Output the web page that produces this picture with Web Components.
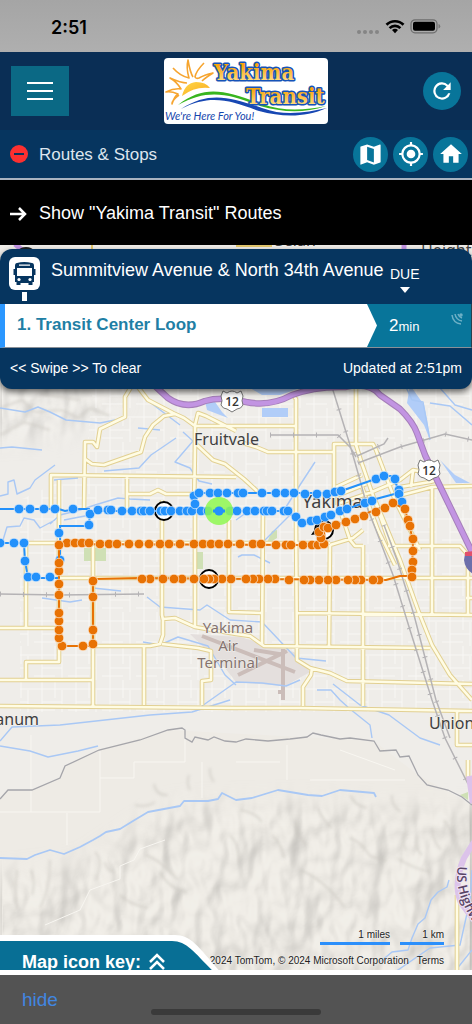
<!DOCTYPE html>
<html lang="en">
<head>
<meta charset="utf-8">
<meta name="viewport" content="width=device-width, initial-scale=1">
<title>Yakima Transit</title>
<style>
  html { height: 100%; }
  body {
    margin: 0;
    min-height: 100%;
    display: flex;
    flex-direction: column;
    font-family: "Liberation Sans", Arial, sans-serif;
    color: white;
    --navy: #06355f;
    --teal: #08759a;
  }
  route-map { flex: 1; }
</style>
</head>
<body>
<status-bar></status-bar>
<app-header><transit-logo></transit-logo></app-header>
<section-bar>Routes &amp; Stops</section-bar>
<show-routes>Show "Yakima Transit" Routes</show-routes>
<route-map>
  <stop-card slot="card">
    <span slot="stop">Summitview Avenue &amp; North 34th Avenue</span>
    <span slot="route">1. Transit Center Loop</span>
    <span slot="updated">Updated at 2:51pm</span>
  </stop-card>
  <map-key slot="key">Map icon key:</map-key>
  <map-credits slot="credits"></map-credits>
</route-map>
<bottom-bar></bottom-bar>

<script>
class BaseElement extends HTMLElement {
  constructor() {
    super();
    this.root = this.attachShadow({ mode: 'open' });
    this.root.innerHTML = this.renderHTML();
  }
}

class StatusBar extends BaseElement {
  renderHTML() {
    return `
      <style>
        :host {
          display: flex;
          align-items: center;
          justify-content: space-between;
          box-sizing: border-box;
          height: 52px;
          padding: 2px 31px 0 51px;
          color: black;
          background: linear-gradient(#a5a5a5, #afafaf);
        }
        time { font: 600 18px Inter, sans-serif; }
        svg { display: block; }
      </style>
      <time>2:51</time>
      <svg width="84" height="18" viewBox="0 0 84 18" aria-label="Wi-Fi on, battery full">
        <g fill="#858585">
          <circle cx="2" cy="14" r="2"/><circle cx="8" cy="14" r="2"/>
          <circle cx="14" cy="14" r="2"/><circle cx="20" cy="14" r="2"/>
        </g>
        <g fill="none" stroke="#000" stroke-width="2.7">
          <path d="M29.5 6.8a12 12 0 0 1 17 0"/>
          <path d="M32.6 10.1a7.6 7.6 0 0 1 10.8 0"/>
        </g>
        <path d="M38 15.2l-3-3.1a4.3 4.3 0 0 1 6 0z"/>
        <rect x="54" y="1.8" width="26" height="13" rx="4" fill="none" stroke="#6d6d6d" stroke-width="1.2"/>
        <rect x="56" y="3.8" width="22" height="9" rx="2"/>
        <path d="M81.5 6v4.6q1.8-.6 1.8-2.3t-1.8-2.3" fill="#777"/>
      </svg>
    `;
  }
}

class TransitLogo extends BaseElement {
  renderHTML() {
    return `
      <style>
        :host { display: block; width: 164px; }
        svg { display: block; width: 100%; background: white; border-radius: 4px; }
        .name {
          font: bold 22px "DejaVu Serif Condensed", "DejaVu Serif", serif;
          fill: url(#gold);
          stroke: #1553b8;
          stroke-width: 3;
          stroke-linejoin: round;
          paint-order: stroke;
        }
        .motto { font: italic 11px Lato, sans-serif; fill: #1546ad; }
      </style>
      <svg viewBox="0 0 164 66" role="img" aria-label="Yakima Transit">
        <defs>
          <linearGradient id="gold" x1="0" y1="0" x2="0" y2="1">
            <stop offset=".25" stop-color="#f9a50e"/>
            <stop offset=".9" stop-color="#ffe28a"/>
          </linearGradient>
          <linearGradient id="sun" x1="0" y1="0" x2="1" y2="1">
            <stop offset="0" stop-color="#ffd84a"/>
            <stop offset="1" stop-color="#f9a81c"/>
          </linearGradient>
        </defs>
        <path d="M18 38Q21 25 32 24Q42 24 46 30Q31 28 18 38z" fill="url(#sun)"/>
        <g fill="none" stroke="#f6a530" stroke-width="1.6" stroke-linejoin="round">
          <path d="M15 37Q8 42 8 46Q10 39 14 36Q7 33 2 34Q10 30 17 31Q13 24 6 20Q17 25 23 25"/>
          <path d="M9 10Q16 18 25 20Q22 10 24 2Q26 14 29 19"/>
          <path d="M40 5Q32 13 31 19Q32 21 35 20Q40 17 49 15Q41 20 38 23"/>
        </g>
        <path d="M14 47C42 25 64 34 98 46C120 54 142 52 162 48C138 56 118 54 96 48C65 36 44 30 14 47z" fill="#38b51f"/>
        <path d="M17 51C46 32 68 40 98 50C122 59 143 54 163 50C140 60 118 59 95 53C65 42 46 36 17 51z" fill="#1747b3"/>
        <text class="name" x="50" y="22">Yakima</text>
        <text class="name" x="82" y="46">Transit</text>
        <text class="motto" x="1" y="62">We're Here For You!</text>
      </svg>
    `;
  }
}

class AppHeader extends BaseElement {
  renderHTML() {
    return `
      <style>
        :host {
          display: flex;
          align-items: center;
          justify-content: space-between;
          padding: 6px 11px;
          background: #0a2e55;
        }
        button { border: 0; padding: 0; display: grid; place-items: center; }
        .menu { width: 58px; height: 50px; background: #0b6985; }
        .refresh { width: 38px; height: 38px; border-radius: 50%; background: var(--teal); }
      </style>
      <button class="menu" aria-label="Menu">
        <svg width="28" height="20" stroke="#fff" stroke-width="2">
          <path d="M1 2h26M1 10h26M1 18h26"/>
        </svg>
      </button>
      <slot></slot>
      <button class="refresh" aria-label="Refresh">
        <svg width="26" height="26" viewBox="0 0 24 24" fill="#fff">
          <path d="M17.65 6.35A8 8 0 1 0 19.73 14h-2.08A6 6 0 1 1 12 6c1.66 0 3.14.69 4.22 1.78L13 11h7V4z"/>
        </svg>
      </button>
    `;
  }
}

class SectionBar extends BaseElement {
  renderHTML() {
    return `
      <style>
        :host {
          display: flex;
          align-items: center;
          height: 48px;
          padding: 0 4px 0 10px;
          border-bottom: 2px solid #a9b3c0;
          background: var(--navy);
        }
        h1 { flex: 1; margin: 2px 0 0 11px; font-size: 17px; font-weight: normal; color: #dde5ee; }
        nav { display: flex; gap: 5px; }
        button { border: 0; padding: 0; display: grid; place-items: center; background: none; }
        nav button { width: 35px; height: 35px; border-radius: 50%; background: var(--teal); }
      </style>
      <button aria-label="Collapse">
        <svg width="18" height="18"><circle cx="9" cy="9" r="9" fill="#fc3030"/><path d="M4 9h10" stroke="#06355f" stroke-width="2"/></svg>
      </button>
      <h1><slot></slot></h1>
      <nav>
        <button aria-label="Map">
          <svg width="27" height="27" viewBox="0 0 24 24" fill="#fff">
            <path d="M20.5 3l-.16.03L15 5.1 9 3 3.36 4.9A.5.5 0 0 0 3 5.38V20.5a.5.5 0 0 0 .66.47L9 18.9l6 2.1 5.64-1.9A.5.5 0 0 0 21 18.62V3.5a.5.5 0 0 0-.5-.5zM15 19l-6-2.11V5l6 2.11z"/>
          </svg>
        </button>
        <button aria-label="My location">
          <svg width="26" height="26" viewBox="0 0 24 24" fill="#fff">
            <path d="M12 8a4 4 0 1 0 0 8 4 4 0 0 0 0-8zm8.94 3A9 9 0 0 0 13 3.06V1h-2v2.06A9 9 0 0 0 3.06 11H1v2h2.06A9 9 0 0 0 11 20.94V23h2v-2.06A9 9 0 0 0 20.94 13H23v-2zM12 19a7 7 0 1 1 0-14 7 7 0 0 1 0 14z"/>
          </svg>
        </button>
        <button aria-label="Home">
          <svg width="26" height="26" viewBox="0 0 24 24" fill="#fff"><path d="M10 20v-6h4v6h5v-8h3L12 3 2 12h3v8z"/></svg>
        </button>
      </nav>
    `;
  }
}

class ShowRoutes extends BaseElement {
  renderHTML() {
    return `
      <style>
        :host { display: block; background: black; }
        button {
          display: flex;
          align-items: center;
          gap: 12px;
          width: 100%;
          height: 65px;
          padding: 2px 10px 0;
          border: 0;
          background: none;
          color: white;
          font: 18px "Liberation Sans", Arial, sans-serif;
        }
      </style>
      <button>
        <svg width="17" height="16" fill="none" stroke="#fff" stroke-width="2.5"><path d="M0 8h15M9 2l6 6-6 6"/></svg>
        <span><slot></slot></span>
      </button>
    `;
  }
}

class StopCard extends BaseElement {
  renderHTML() {
    return `
      <style>
        :host {
          display: block;
          overflow: hidden;
          border-radius: 12px;
          background: var(--navy);
          box-shadow: 0 3px 6px rgba(0, 0, 0, 0.6);
        }
        header, .arrival, footer { display: flex; }
        header { height: 55px; }
        .sign { margin: 8px 11px 0 9px; flex: none; }
        h2 { flex: 1; margin: 11px 0 0; font-size: 18px; line-height: 20px; font-weight: normal; white-space: nowrap; }
        .due {
          flex: none;
          width: 82px;
          padding-top: 17px;
          font-size: 14px;
          line-height: 16px;
        }
        .due svg { display: block; margin: 5px 0 0 10px; }
        .arrival {
          height: 44px;
          box-sizing: border-box;
          border-left: 5px solid #2b97ff;
          border-right: 1px solid #24414f;
          background: var(--teal);
          border-bottom: 1px solid #8a9097;
        }
        .arrival a {
          flex: 1;
          padding-left: 12px;
          background: white;
          color: #1f7fa5;
          font-size: 17px;
          line-height: 42px;
          font-weight: bold;
          text-decoration: none;
          clip-path: polygon(0 0, calc(100% - 10px) 0, 100% 50%, calc(100% - 10px) 100%, 0 100%);
        }
        .time { width: 82px; padding-left: 12px; display: flex; justify-content: space-between; font-size: 17px; line-height: 44px; }
        .time small { font-size: 13px; }
        .time svg { margin: 9px 8px 0 0; }
        footer { justify-content: space-between; padding: 0 10px; font-size: 14px; line-height: 41px; }
      </style>
      <header>
        <svg class="sign" width="31" height="44" viewBox="0 0 31 44" role="img" aria-label="Bus stop">
          <rect width="31" height="33" rx="6" fill="#fff"/>
          <rect x="13" y="35" width="5" height="9" fill="#fff"/>
          <path fill="#06355f" d="M8 6Q15 4 23 6Q25 6 25 9V12h1.5v6H25v7h-1.5v3h-4v-2h-8v2h-4v-3H6v-7H4.5v-6H6V9Q6 6 8 6z"/>
          <path fill="#fff" d="M10 7.5h11v1.3H10zM8 11h15v8H8z"/>
          <circle cx="10" cy="22.5" r="1.6" fill="#fff"/><circle cx="21" cy="22.5" r="1.6" fill="#fff"/>
        </svg>
        <h2><slot name="stop"></slot></h2>
        <div class="due">DUE
          <svg width="10" height="6" fill="#fff"><path d="M0 0h10L5 6z"/></svg>
        </div>
      </header>
      <div class="arrival">
        <a href="#route-1"><slot name="route"></slot></a>
        <div class="time">
          <span>2<small>min</small></span>
          <svg width="12" height="12" fill="none" stroke="#6db0c6" stroke-width="1.5">
            <path d="M1 2Q2 10 10 11M4 1Q5 7 11 8M7 1Q8 4 11 5"/><circle cx="10" cy="2" r="1"/>
          </svg>
        </div>
      </div>
      <footer>
        <span>&lt;&lt; Swipe &gt;&gt; To clear</span>
        <slot name="updated"></slot>
      </footer>
    `;
  }
}

// main roads, drawn as a tan casing with a pale centre
const ROADS = `
  M131 387L125 397V417L100 429L97 447L93 442H85L84 509
  M85 459L92 464L104 465L141 452L145 437L153 425L164 416L175 414
  M138 387L148 400L173 413L184 418L195 426V445L194 512
  M195 425L198 413L206 416L236 431M195 426H296M197 445L213 460L225 464L244 479L257 491
  M51 509V475L236 477M127 477V512M128 494H150L158 490L166 494H193
  M243 443L256 447L268 452H333M291 393L296 399V520L297 660L310 668L330 673L347 681L472 684
  M356 389V445L361 461M334 505V444H373L376 450
  M336 487L362 475M336 496L366 484M340 503L372 492L400 480L413 470L430 473M413 471L411 487M400 487L430 482L438 480
  M402 495L425 489L432 487L472 486M432 488V615
  M361 461L392 550M376 450L395 500L420 550M362 487L378 530L395 565M340 510L350 540L355 546H363M330 545L353 538L363 530
  M26 543V628M26 543H330M59 578H472M0 628H59M59 480V662H26V680M0 680H93M93 545V706
  M0 706L236 708H300L472 711M93 646H150L160 644L163 635V620L162 615V500M162 644L198 648L211 651V680L202 681V705
  M144 646V705M163 619L175 618L195 627L236 634L250 636L264 646L430 648M195 510V626M229 520V612L262 613M263 512L262 645
  M297 613L472 615M330 545L329 646M363 545V706M312 668L311 675L303 687V706
  M375 500L400 560L418 610L432 645L450 675L472 700M388 546H460L468 555V615M466 598H472
  M457 712V745H472M457 895V972M468 760V780`;

const RIVERS = `
  M0 408L25 412L38 407L50 412L66 420L100 423L115 420M0 448L12 447L42 450
  M0 496L8 494L8 482L14 480L17 494L30 488L35 480L55 465M54 480L78 478M104 471L139 468L151 455L176 438
  M183 432L193 441L175 462L190 468L199 481L212 484M138 428L160 430
  M50 524L60 515L80 510L95 505L118 498L130 499L150 500
  M3 540L7 527L20 526L24 518L34 520L40 528L55 520M64 520L90 515
  M42 598L70 602L82 600M93 588L121 591M147 597L160 607L200 610L207 605L230 620L262 622L296 658L326 661
  M143 642L160 645L178 637L208 646L225 675L236 685M202 706L236 682L262 683L286 686L300 680
  M0 741L12 727L60 725L150 715L192 712L230 700M317 690L331 690L340 700L350 709L370 725L372 738M333 684L360 705L389 715L420 738L440 745
  M238 557L242 555H254L270 563M262 543L275 530L290 515M286 507L300 485L315 462
  M147 400L180 425M405 385L412 400L423 402L430 440M440 388L455 405L472 410M430 403L450 406L472 425
  M236 520L250 510L275 512M0 746L30 751L48 757L78 751L98 746M395 972L430 948L460 945L470 900L472 870
  M456 970L472 950M380 962L392 952L408 950L412 938L418 924L425 918L431 900L438 892L447 887L449 880`;

const RIDGE_STREAM = 'M0 858L27 859L35 855L50 850L64 854L80 847L93 840L100 836L106 832L120 829L133 821L148 812L180 806L184 801L208 801L218 799L222 793L236 800L252 798L278 790L308 795L322 796L340 790L374 793L376 797';
const BOUNDARY = 'M0 799L8 790H32L60 778L65 766L99 750L140 740L168 730L182 728L185 730V738L192 742L195 737L208 740L214 737L225 741L236 742L246 739L268 741L290 739L307 737L313 733L321 735L340 739L350 738L374 741L380 751L396 750L400 757L409 756L418 775L427 785L448 790L462 797L472 805';
const HIGHWAY = 'M154 385L168 398Q185 410 205 401Q222 396 246 402Q270 407 292 395Q315 386 345 387Q370 382 380 395L400 409Q413 422 417 433L425 455L438 482L472 552';
const RAILS = 'M332 387L350 445L360 480L368 510L376 530L393 575L410 630L432 700L445 738L468 784M384 525L397 560L414 615L436 700L450 738M270 435H338L350 447L356 457M357 456L384 444L388 438M358 463L400 447L445 434L472 440M0 594L60 595L144 594';

const BLUE_LINES = 'M0 509H59L65 511L75 509H90M59 578H28L25 561L24 543H0M60 560V526H89L90 511H219M219 511H288Q298 523 305 524L347 509L372 500L402 492M194 511V496L199 493H335L341 491L384 476H391L399 489L402 502';
const ORANGE_LINES = 'M324 530L325 543L303 545L59 544V640L62 646H93V579L140 578L386 580L400 576H412L413 540L405 509L393 503L324 530';

const BLUE_STOPS = [
  [0, 543], [14, 543], [24, 543], [25, 561], [28, 577], [36, 577], [50, 577], [59, 533], [60, 560], [89, 525],
  [19, 509], [30, 509], [44, 509], [55, 509], [73, 509], [90, 514], [98, 510], [108, 510], [111, 510], [122, 511],
  [132, 511], [141, 511], [144, 511], [150, 511], [161, 511], [165, 511], [171, 511], [180, 511], [187, 511], [192, 511],
  [201, 511], [208, 511], [219, 511], [230, 511], [237, 511], [247, 511], [255, 511], [264, 511], [267, 511], [272, 511],
  [284, 511], [288, 511], [296, 517], [302, 523], [311, 521], [317, 520], [325, 517], [331, 515], [340, 511], [347, 509],
  [365, 503], [372, 501], [194, 496], [195, 504], [199, 493], [210, 493], [218, 493], [227, 493], [238, 493], [243, 493],
  [262, 493], [276, 493], [285, 493], [294, 493], [305, 494], [317, 494], [327, 494], [335, 492], [341, 491], [376, 479],
  [384, 476], [395, 479], [399, 490], [399, 494], [402, 502]
];

const ORANGE_STOPS = [
  [67, 543], [75, 543], [82, 543], [89, 543], [100, 544], [109, 544], [117, 544], [129, 544], [139, 544], [149, 544],
  [160, 544], [169, 544], [180, 544], [194, 544], [203, 544], [211, 544], [219, 544], [228, 544], [240, 544], [253, 544],
  [261, 544], [276, 545], [286, 545], [291, 545], [303, 545], [312, 545], [318, 545], [324, 544], [321, 538], [319, 532],
  [324, 527], [328, 528], [336, 525], [346, 522], [355, 519], [364, 516], [376, 512], [385, 508], [393, 503], [405, 509],
  [408, 520], [410, 526], [413, 539], [413, 551], [413, 562], [412, 570], [412, 577], [379, 580], [373, 580], [361, 580],
  [355, 580], [348, 580], [336, 580], [328, 580], [319, 580], [310, 580], [304, 580], [289, 580], [275, 579], [268, 579],
  [259, 579], [253, 579], [246, 579], [231, 579], [222, 579], [214, 579], [209, 579], [204, 579], [194, 579], [182, 579],
  [174, 579], [163, 579], [150, 579], [142, 579], [93, 581], [93, 597], [93, 630], [93, 644], [83, 646], [62, 646],
  [59, 638], [59, 630], [59, 621], [59, 613], [59, 595], [59, 584], [59, 571], [59, 563], [59, 545]
];

const dots = stops => stops.map(([x, y]) => `<circle cx="${x}" cy="${y}" r="4.8"/>`).join('');

class RouteMap extends BaseElement {
  renderHTML() {
    return `
      <style>
        :host {
          position: relative;
          display: flex;
          flex-direction: column;
          justify-content: space-between;
          min-height: 600px;
          padding-top: 4px;
          box-sizing: border-box;
          overflow: hidden;
          background: #efede9;
          border-bottom: 5px solid white;
        }
        .map { position: absolute; inset: 0; width: 100%; height: 100%; }
        .card, .bottom { position: relative; }
        .bottom { display: flex; justify-content: space-between; align-items: flex-end; margin-bottom: -5px; }
        .place { font: 16px "Noto Sans", "Open Sans", sans-serif; fill: #404040; stroke: #f3f1ed; stroke-width: 1; paint-order: stroke; }
        .big { font-size: 18px; }
        .airport { font-size: 15px; fill: #84736f; text-anchor: middle; }
        .shield { font: 600 12px "Open Sans", sans-serif; text-anchor: middle; fill: #333; }
        .highway { font: 600 13px "Open Sans", sans-serif; fill: #594566; stroke: #efe3f4; stroke-width: 2; paint-order: stroke; }
      </style>
      <svg class="map" viewBox="0 245 472 725" preserveAspectRatio="xMidYMin slice" role="img" aria-label="Route map of Yakima">
        <defs>
          <pattern id="streets" width="34" height="34" patternUnits="userSpaceOnUse">
            <path d="M8 0V34M21 0V18M28 10V34M0 9H34M8 22H28M0 30H21" fill="none" stroke="#fbfaf8" stroke-width="1"/>
          </pattern>
          <filter id="soft" x="-10%" y="-10%" width="120%" height="120%"><feGaussianBlur stdDeviation="12"/></filter>
          <filter id="blur"><feGaussianBlur stdDeviation="1.8"/></filter>
          <filter id="relief" x="0" y="0" width="100%" height="100%" color-interpolation-filters="sRGB">
            <feTurbulence type="fractalNoise" baseFrequency="0.03 0.018" numOctaves="3" seed="12"/>
            <feColorMatrix values="0 0 0 0 0  0 0 0 0 0  0 0 0 0 0  1 0 0 0 0"/>
            <feGaussianBlur stdDeviation="1.2"/>
            <feDiffuseLighting surfaceScale="14" diffuseConstant="1.1" lighting-color="#edeae3"><feDistantLight azimuth="225" elevation="64"/></feDiffuseLighting>
          </filter>
          <mask id="hills">
            <g filter="url(#soft)" fill="#fff">
              <path d="M-40 880L80 866L170 806L300 802L400 808L490 806V1010H-40z"/>
              <path d="M-30 370H118V410L60 435L-30 440z"/>
            </g>
          </mask>
          <path id="us97" d="M458 866Q453 893 475 925L490 940"/>
          <path id="sign" d="M-9-10L-5-8Q0-12 5-8L9-10L11-5Q9 0 11 4Q9 8 5 8L0 11L-5 8Q-9 8-11 4Q-9 0-11-5z"/>
        </defs>

        <path d="M0 800L8 790H32L60 778L65 766L99 750L168 730L374 741L418 775L472 805V975H0z" fill="#eeebe5"/>
        <rect y="245" width="472" height="730" fill="#fff" filter="url(#relief)" mask="url(#hills)" opacity=".2"/>
        <path d="M93 388H472V712H20V500L85 470z" fill="url(#streets)" opacity=".75"/>
        <g fill="none" stroke="#f8f6f1" stroke-width="1">
          <path d="M31 735V812M0 812H100V750M67 813V845M100 778H134V762H185V735M45 925L80 910L90 890L120 879V866L134 860L140 849L165 840M202 762V798M287 745V780M236 762H280M310 780H405M340 750L395 770"/>
        </g>
        <g fill="none" stroke="#c9c6bf" stroke-width="2" filter="url(#blur)" opacity=".6">
          <path d="M0 408L22 400L35 412L62 410L78 418L90 408L110 416M0 435L24 422L50 430M40 394L80 400"/>
          <path d="M154 784Q156 796 168 795M135 805Q146 808 155 802M189 775Q186 784 190 790M210 768Q209 776 214 782M17 870Q14 895 18 910M31 870Q36 880 32 895M50 860Q50 890 40 908M95 852Q104 860 96 880M105 862Q106 870 114 872M146 855Q160 860 178 880M120 895Q130 905 148 908M272 835Q282 845 284 858M295 820Q296 835 306 845M318 808Q322 820 332 828M350 795Q355 806 367 808M392 795Q391 806 401 812M349 838Q360 840 370 856L387 861M405 832Q401 842 406 850M417 835Q414 848 422 855M432 828Q433 842 441 850M444 820Q450 830 457 838M397 858Q412 868 430 872M160 872Q170 890 187 892M300 870Q325 880 345 908M240 810Q255 812 262 822M230 835Q240 845 238 862"/>
        </g>
        <g fill="#cfe0b5"><path d="M84 548H106V561H84zM197 552H203V569H197zM266 545L272 531L277 530V538zM460 795L468 792V800z"/></g>
        <g fill="#b1cdf8"><path d="M205 401L213 399L222 412L228 418L207 410zM262 408H288V417H262zM410 385L424 405L427 420L430 440L424 425L407 403zM440 460L455 475L470 483L456 483zM250 388H300L280 395H262z"/></g>
        <path d="M190 634L240 637L294 652L310 672L285 686L236 682L225 668z" fill="#e4dfdd"/>
        <g fill="none" stroke="#cbbdb9" stroke-width="4">
          <path d="M202 636L295 672M238 675L287 651M283 649V700M278 692H285M254 650L285 655"/>
        </g>

        <g fill="none" stroke="#a9c8f5" stroke-width="1.4" stroke-linejoin="round"><path d="${RIVERS}"/><path d="${RIDGE_STREAM}" stroke-width="1.8"/></g>
        <path d="${BOUNDARY}" fill="none" stroke="#a5a5aa" stroke-width="1.3"/>
        <path d="${ROADS}" fill="none" stroke="#e2d092" stroke-width="4.6" stroke-linejoin="round"/>
        <path d="${ROADS}" fill="none" stroke="#fffce4" stroke-width="2.6" stroke-linejoin="round"/>
        <path d="${RAILS}" fill="none" stroke="#b5b3b5" stroke-width="1.5"/>
        <path d="${RAILS}" fill="none" stroke="#b5b3b5" stroke-width="5" stroke-dasharray="1 22"/>
        <g fill="none" stroke-linejoin="round">
          <path d="${HIGHWAY}" stroke="#a67fba" stroke-width="6.5"/>
          <path d="${HIGHWAY}" stroke="#c294e2" stroke-width="4.5"/>
          <path d="M469 776L473 803M474 842L464 858Q453 884 461 903L474 920" stroke="#dcc3ea" stroke-width="6"/>
          <path d="M15 244L22 250M404 244V250" stroke="#c294e2" stroke-width="5"/>
          <path d="M92 244V250M236 246H272" stroke="#e2c66c" stroke-width="2"/>
        </g>
        <ellipse cx="26" cy="250" rx="7" ry="3" fill="#222"/>

        <text class="place" x="275" y="246">Selah</text>
        <text class="place" x="421" y="256">Heights</text>
        <text class="place" x="194" y="445">Fruitvale</text>
        <text class="place big" x="302" y="508">Yakima</text>
        <text class="place" x="39" y="725" text-anchor="end">Ahtanum</text>
        <text class="place" x="429" y="729">Union Gap</text>
        <text class="place airport"><tspan x="228" y="633">Yakima</tspan><tspan x="228" y="651">Air</tspan><tspan x="228" y="668">Terminal</tspan></text>
        <text class="highway"><textPath href="#us97">US Highway 97</textPath></text>
        <g fill="#fff" stroke="#777" stroke-width="1">
          <use href="#sign" x="232" y="401"/><use href="#sign" x="429" y="470"/>
        </g>
        <text class="shield" x="232" y="406">12</text>
        <text class="shield" x="429" y="475">12</text>
        <path d="M465 554L475 551V575Q465 570 464 560z" fill="#6c6fab"/>
        <path d="M465 556V552L475 551V556z" fill="#e1506b"/>

        <circle cx="164" cy="511" r="9" fill="#fff" stroke="#000" stroke-width="2"/>
        <circle cx="324" cy="530" r="9" fill="#fff" stroke="#000" stroke-width="2"/>
        <path d="M311 535L321 520L318 534z"/>
        <path d="${BLUE_LINES}" fill="none" stroke="#2391fb" stroke-width="2"/>
        <g fill="#2391fb" stroke="#e6f1fb" stroke-width=".7">${dots(BLUE_STOPS)}</g>
        <circle cx="209" cy="579" r="9" fill="#fff" stroke="#000" stroke-width="2"/>
        <path d="${ORANGE_LINES}" fill="none" stroke="#e87204" stroke-width="2"/>
        <g fill="#e87204" stroke="#fdf0e2" stroke-width=".7">${dots(ORANGE_STOPS)}</g>
        <circle cx="219" cy="511" r="14" fill="#8ef850" opacity=".85"/>
        <path d="M213 511H225" stroke="#2391fb" stroke-width="3"/>
        <circle cx="219" cy="511" r="4.6" fill="#2391fb"/>
      </svg>
      <div class="card"><slot name="card"></slot></div>
      <div class="bottom"><slot name="key"></slot><slot name="credits"></slot></div>
    `;
  }
}

class MapKey extends BaseElement {
  renderHTML() {
    return `
      <style>
        :host { display: block; position: relative; z-index: 1; width: 223px; height: 40px; margin-right: -24px; flex: none; }
        .tab { position: absolute; inset: 0; }
        button {
          position: relative;
          display: flex;
          align-items: center;
          gap: 8px;
          height: 40px;
          padding: 14px 0 0 22px;
          box-sizing: border-box;
          border: 0;
          background: none;
          color: white;
          font: bold 18px "Liberation Sans", Arial, sans-serif;
        }
      </style>
      <svg class="tab" width="223" height="40">
        <path d="M0 0H175C192 0 200 14 223 40H0z" fill="#fff"/>
        <path d="M0 6H172C188 6 196 20 217 40H0z" fill="#086f95"/>
      </svg>
      <button>
        <span><slot></slot></span>
        <svg width="16" height="18" fill="none" stroke="#fff" stroke-width="2.5"><path d="M1 9l7-7 7 7M1 16l7-7 7 7"/></svg>
      </button>
    `;
  }
}

class MapCredits extends BaseElement {
  renderHTML() {
    return `
      <style>
        :host {
          display: block;
          margin: 0 28px 7px 0;
          font-size: 10px;
          line-height: 14px;
          color: #222;
          white-space: nowrap;
          text-shadow: 0 0 2px white;
        }
        .scales, .credits { display: flex; justify-content: flex-end; }
        .scales { gap: 10px; margin-bottom: 9px; text-align: right; }
        .scales span { border-bottom: 3px solid #2b8ffb; line-height: 14px; }
        .miles { width: 70px; }
        .km { width: 44px; }
        .credits { gap: 8px; }
        a { color: inherit; text-decoration: none; }
      </style>
      <div class="scales"><span class="miles">1 miles</span><span class="km">1 km</span></div>
      <div class="credits"><span>2024 TomTom, © 2024 Microsoft Corporation</span><a href="#terms">Terms</a></div>
    `;
  }
}

class BottomBar extends BaseElement {
  renderHTML() {
    return `
      <style>
        :host { display: block; position: relative; height: 49px; background: #535353; }
        a { display: inline-block; padding-left: 22px; font-size: 19px; line-height: 50px; color: #4186e0; text-decoration: none; }
        .home { position: absolute; bottom: 9px; left: 32%; right: 32%; height: 6px; border-radius: 3px; background: #3a3a3a; }
      </style>
      <a href="#hide">hide</a>
      <div class="home"></div>
    `;
  }
}

customElements.define('status-bar', StatusBar);
customElements.define('transit-logo', TransitLogo);
customElements.define('app-header', AppHeader);
customElements.define('section-bar', SectionBar);
customElements.define('show-routes', ShowRoutes);
customElements.define('stop-card', StopCard);
customElements.define('route-map', RouteMap);
customElements.define('map-key', MapKey);
customElements.define('map-credits', MapCredits);
customElements.define('bottom-bar', BottomBar);
</script>
</body>
</html>
